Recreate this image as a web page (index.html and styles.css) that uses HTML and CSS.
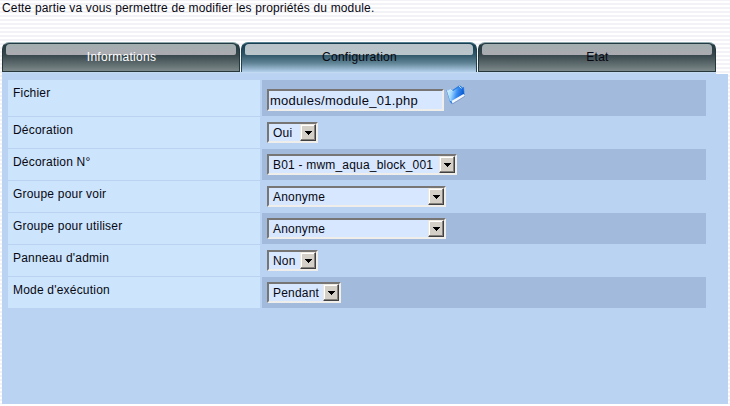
FILE: index.html
```html
<!DOCTYPE html>
<html lang="fr">
<head>
<meta charset="utf-8">
<title>Configuration du module</title>
<link rel="stylesheet" href="styles.css">
</head>
<body>
<p class="intro">Cette partie va vous permettre de modifier les propriétés du module.</p>
<nav class="tabs">
  <a class="tab tab-light"><span>Informations</span></a>
  <a class="tab tab-active"><span>Configuration</span></a>
  <a class="tab"><span>Etat</span></a>
</nav>
<main class="panel">
  <div class="row row-file odd">
    <div class="label">Fichier</div>
    <div class="value">
      <div class="field"><span>modules/module_01.php</span></div>
      <svg class="folder" width="20" height="20" viewBox="0 0 20 20">
        <defs><linearGradient id="blue" x1="0" y1="0.2" x2="1" y2=".4"><stop offset="0" stop-color="#e2f8ff"/><stop offset=".3" stop-color="#9ed8ff"/><stop offset=".6" stop-color="#3c90f4"/><stop offset="1" stop-color="#0756cf"/></linearGradient></defs>
        <path d="M.5 5.500 4 4l2.500 1L13 .5l2 .5 1 1.500 2-.5.500 8L6 19l-2-2Z" fill="#2b7de0"/>
        <path d="M1 6 4.500 4.500 7 6l7-4.500 1.500 2L17 3l1 6L6.500 16 4 16Z" fill="url(#blue)"/>
        <path d="M5.500 16 17.500 9l1.200 2L6.500 18.500Z" fill="#f3f8ff"/>
        <path d="M6.500 19 19 11.200" stroke="#7f97c4" stroke-width=".8" fill="none"/>
        <path d="M1 5.500 4.500 4.500 6.500 6M13 1l2.500 2.500" stroke="#fff" fill="none" stroke-width=".7"/>
      </svg>
    </div>
  </div>
  <div class="row"><div class="label">Décoration</div><div class="value"><div class="select w51"><span>Oui</span><i></i></div></div></div>
  <div class="row odd"><div class="label">Décoration N°</div><div class="value"><div class="select w190"><span>B01 - mwm_aqua_block_001</span><i></i></div></div></div>
  <div class="row"><div class="label">Groupe pour voir</div><div class="value"><div class="select w179"><span>Anonyme</span><i></i></div></div></div>
  <div class="row odd"><div class="label">Groupe pour utiliser</div><div class="value"><div class="select w179"><span>Anonyme</span><i></i></div></div></div>
  <div class="row"><div class="label">Panneau d'admin</div><div class="value"><div class="select w51"><span>Non</span><i></i></div></div></div>
  <div class="row odd"><div class="label">Mode d'exécution</div><div class="value"><div class="select w74"><span>Pendant</span><i></i></div></div></div>
</main>
<footer class="foot"></footer>
</body>
</html>
```
FILE: styles.css
```css
* { box-sizing: border-box; }
body {
  margin: 0;
  height: 406px;
  overflow: hidden;
  font: 12px/16px "Liberation Sans", Arial, sans-serif;
  color: #080812;
  background: repeating-linear-gradient(#f3f2f7 0 1px, #fff 1px 3px, #f3f2f7 3px 4px);
}
.intro { margin: 0; padding: 0 2px; height: 42px; letter-spacing: .15px; white-space: nowrap; }
.tabs {
  display: grid;
  grid-template-columns: 238px 236px 238px;
  gap: 1px;
  width: 714px;
  height: 32px;
  margin-left: 2px;
  background: linear-gradient(#c5dcf3, #bad3f2) 0 100% / 100% 2px no-repeat;
}
.tab {
  height: 30px;
  padding: 1px 3px 0;
  border: 1px solid #26373c;
  border-top-color: #8fa8ad;
  border-radius: 7px 7px 0 0;
  background: linear-gradient(#233a42 0 2px, #38474c 12px, #7c8889 28px);
  text-align: center;
}
.tab::before {
  content: "";
  display: block;
  height: 11px;
  border-radius: 4px 4px 2px 2px;
  background: linear-gradient(#a2aeaf, #ababb1);
}
.tab span { display: block; position: relative; left: .5px; top: -5px; line-height: 14px; letter-spacing: .28px; }
.tab-light { color: #fff; }
.tab-active { border-color: #1c4354; border-top-color: #557f91; border-bottom: 0; background: linear-gradient(#163e50 0 2px, #31576a 12px, #5f8394 20px, #b4d0ec 29px); }
.tab-active::before { background: linear-gradient(#b6c2c8, #bac6ca); }
.panel { width: 726px; height: 330px; margin-left: 2px; padding: 6px 22px 0 6px; background: #bad3f2; }
.foot { height: 2px; background: #fff; }
.row { display: grid; grid-template-columns: 252px 444px; column-gap: 2px; height: 31px; margin-bottom: 1px; }
.row-file { height: 36px; }
.label { background: #cce4fc; padding: 5px 5px 0; white-space: nowrap; letter-spacing: .2px; }
.value { padding: 5px 5px 0; display: flex; align-items: flex-start; }
.odd .value { background: #a2badb; }
.field, .select { background: #d6e7ff; border: 2px solid #777674; border-right-color: #f0eeeb; border-bottom-color: #f0eeeb; white-space: nowrap; }
.field { width: 177px; height: 22px; margin-top: 4px; padding: 1px 1px 0; font-size: 13px; line-height: 18px; letter-spacing: .27px; }
.folder { margin-left: 2px; flex: none; }
.select { height: 21px; display: flex; justify-content: space-between; padding-left: 4px; line-height: 18px; letter-spacing: .2px; }
.select i { width: 16px; height: 17px; flex: none; background: #d4d0c8; border: 1px solid #eeeae2; border-right: 1px solid #404040; border-bottom: 1px solid #404040; box-shadow: inset -1px -1px #85827d, inset 1px 1px #fff; }
.select i::after {
  content: "";
  display: block;
  margin: 6px 0 0 4px;
  width: 7px;
  height: 4px;
  background:
    linear-gradient(#000, #000) 0 0 / 7px 1px no-repeat,
    linear-gradient(#000, #000) 1px 1px / 5px 1px no-repeat,
    linear-gradient(#000, #000) 2px 2px / 3px 1px no-repeat,
    linear-gradient(#000, #000) 3px 3px / 1px 1px no-repeat;
}
.w51 { width: 51px; }
.w74 { width: 74px; }
.w179 { width: 179px; }
.w190 { width: 190px; }
```
